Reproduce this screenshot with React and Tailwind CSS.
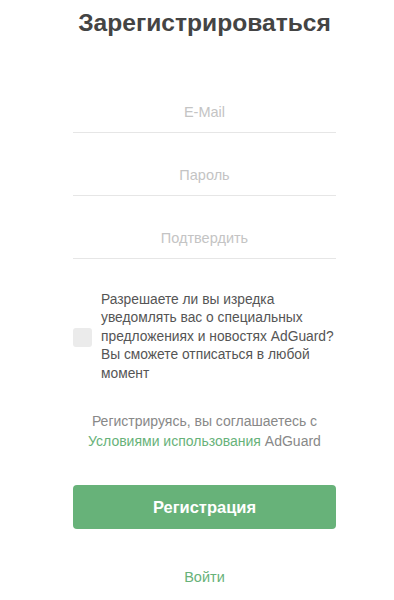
import { useState } from 'react';

const Field = ({ placeholder, type = 'text' }) => {
  const [value, setValue] = useState('');
  return (
    <input
      type={type}
      value={value}
      onChange={(e) => setValue(e.target.value)}
      placeholder={placeholder}
      className="h-[42px] w-full border-b border-[#e6e6e6] bg-transparent text-center text-[14.5px] text-[#444] placeholder:text-[#c4c4c4] focus:outline-none"
    />
  );
};

const App = () => {
  const [agree, setAgree] = useState(false);

  return (
    <div className="min-h-screen bg-white pl-[15px] font-['Liberation_Sans',Arial,sans-serif]">
      <div className="mx-auto w-[263px]">
        <h1 className="pt-[6px] text-center text-[24.6px] font-bold leading-[34px] text-[#444]">
          Зарегистрироваться
        </h1>

        <div className="mt-[51px] flex flex-col gap-[21px]">
          <Field placeholder="E-Mail" type="email" />
          <Field placeholder="Пароль" type="password" />
          <Field placeholder="Подтвердить" type="password" />
        </div>

        <label className="mt-[32px] flex cursor-pointer items-center gap-[9px]">
          <input
            type="checkbox"
            checked={agree}
            onChange={() => setAgree(!agree)}
            className="sr-only"
          />
          <span className="h-[19px] w-[19px] shrink-0 rounded-[3px] bg-[#ebebeb]" />
          <span className="text-[13.8px] leading-[18.4px] text-[#555]">
            Разрешаете ли вы изредка уведомлять вас о специальных предложениях и новостях AdGuard? Вы сможете отписаться в любой момент
          </span>
        </label>

        <p className="mt-[28px] text-center text-[14px] leading-[20px] text-[#888]">
          Регистрируясь, вы соглашаетесь с
          <br />
          <a href="#" className="text-[#67b279]">Условиями использования</a> AdGuard
        </p>

        <button className="mt-[34px] h-[44px] w-full rounded-[4px] bg-[#67b279] text-[16.5px] font-bold text-white">
          Регистрация
        </button>

        <div className="mt-[36px] text-center">
          <a href="#" className="text-[14.5px] text-[#67b279]">Войти</a>
        </div>
      </div>
    </div>
  );
};

export default App;
